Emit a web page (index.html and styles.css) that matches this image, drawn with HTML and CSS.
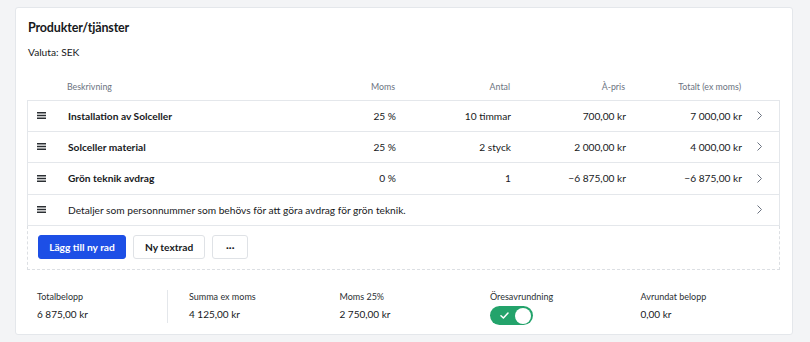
FILE: index.html
```html
<!DOCTYPE html>
<html lang="sv">
<head>
    <meta charset="UTF-8">
    <meta name="viewport" content="width=device-width, initial-scale=1.0">
    <title>Produkter/tjänster</title>
    <link rel="stylesheet" href="styles.css">
</head>
<body>
    <div class="card">
        <h2 class="card-title">Produkter/tjänster</h2>
        <p class="currency">Valuta: SEK</p>

        <div class="rows">
            <div class="row row-head">
                <span></span>
                <span>Beskrivning</span>
                <span class="num">Moms</span>
                <span class="num">Antal</span>
                <span class="num">À-pris</span>
                <span class="num">Totalt (ex moms)</span>
                <span></span>
            </div>

            <div class="row row-item">
                <span class="drag"><svg width="9" height="7" viewBox="0 0 9 7"><path d="M0 0.75H9M0 3.5H9M0 6.25H9" stroke="#2b2f33" stroke-width="1.3"/></svg></span>
                <span class="desc">Installation av Solceller</span>
                <span class="num">25 %</span>
                <span class="num">10 timmar</span>
                <span class="num">700,00 kr</span>
                <span class="num">7 000,00 kr</span>
                <span class="chev"><svg width="5" height="9" viewBox="0 0 5 9"><path d="M0.5 0.5L4.5 4.5L0.5 8.5" fill="none" stroke="#6b7280" stroke-width="1"/></svg></span>
            </div>
            <div class="row row-item">
                <span class="drag"><svg width="9" height="7" viewBox="0 0 9 7"><path d="M0 0.75H9M0 3.5H9M0 6.25H9" stroke="#2b2f33" stroke-width="1.3"/></svg></span>
                <span class="desc">Solceller material</span>
                <span class="num">25 %</span>
                <span class="num">2 styck</span>
                <span class="num">2 000,00 kr</span>
                <span class="num">4 000,00 kr</span>
                <span class="chev"><svg width="5" height="9" viewBox="0 0 5 9"><path d="M0.5 0.5L4.5 4.5L0.5 8.5" fill="none" stroke="#6b7280" stroke-width="1"/></svg></span>
            </div>
            <div class="row row-item">
                <span class="drag"><svg width="9" height="7" viewBox="0 0 9 7"><path d="M0 0.75H9M0 3.5H9M0 6.25H9" stroke="#2b2f33" stroke-width="1.3"/></svg></span>
                <span class="desc">Grön teknik avdrag</span>
                <span class="num">0 %</span>
                <span class="num">1</span>
                <span class="num">&minus;6 875,00 kr</span>
                <span class="num">&minus;6 875,00 kr</span>
                <span class="chev"><svg width="5" height="9" viewBox="0 0 5 9"><path d="M0.5 0.5L4.5 4.5L0.5 8.5" fill="none" stroke="#6b7280" stroke-width="1"/></svg></span>
            </div>
            <div class="row row-item row-text">
                <span class="drag"><svg width="9" height="7" viewBox="0 0 9 7"><path d="M0 0.75H9M0 3.5H9M0 6.25H9" stroke="#2b2f33" stroke-width="1.3"/></svg></span>
                <span class="note">Detaljer som personnummer som behövs för att göra avdrag för grön teknik.</span>
                <span class="chev"><svg width="5" height="9" viewBox="0 0 5 9"><path d="M0.5 0.5L4.5 4.5L0.5 8.5" fill="none" stroke="#6b7280" stroke-width="1"/></svg></span>
            </div>

            <div class="row-actions">
                <button class="btn btn-primary">Lägg till ny rad</button>
                <button class="btn">Ny textrad</button>
                <button class="btn btn-more">&middot;&middot;&middot;</button>
            </div>
        </div>

        <div class="summary">
            <div class="sum-col sum-first">
                <div class="sum-label">Totalbelopp</div>
                <div class="sum-value">6 875,00 kr</div>
            </div>
            <div class="sum-col">
                <div class="sum-label">Summa ex moms</div>
                <div class="sum-value">4 125,00 kr</div>
            </div>
            <div class="sum-col">
                <div class="sum-label">Moms 25%</div>
                <div class="sum-value">2 750,00 kr</div>
            </div>
            <div class="sum-col">
                <div class="sum-label">Öresavrundning</div>
                <div class="toggle on">
                    <svg class="toggle-check" width="9" height="7" viewBox="0 0 9 7">
                        <path d="M1 3.8 L3.4 6 L8 1" fill="none" stroke="#fff" stroke-width="1.5" stroke-linecap="round" stroke-linejoin="round"/>
                    </svg>
                    <span class="toggle-knob"></span>
                </div>
            </div>
            <div class="sum-col">
                <div class="sum-label">Avrundat belopp</div>
                <div class="sum-value">0,00 kr</div>
            </div>
        </div>
    </div>
</body>
</html>
```

FILE: styles.css
```css
body {
    margin: 0;
    padding: 7px 17px 0 15px;
    background: #f3f4f6;
    font-family: Lato, "Noto Sans", sans-serif;
    color: #17191c;
}

.card {
    background: #fff;
    border: 1px solid #e4e7eb;
    border-radius: 3px;
    height: 328px;
    padding: 0 12px 0 11px;
    box-sizing: border-box;
}

.card-title {
    margin: 12px 0 0 1px;
    font-size: 12.5px;
    font-weight: 700;
    line-height: 16px;
    letter-spacing: -0.15px;
}

.currency {
    margin: 8px 0 0 1px;
    font-size: 10.2px;
    line-height: 16px;
}

.row {
    display: grid;
    grid-template-columns: 40px 248px 80px 115px 115px 116px 1fr;
    align-items: center;
    font-size: 10.2px;
}

.row-head {
    height: 28px;
    margin-top: 12px;
    font-size: 8.8px;
    color: #6b7280;
}

.row-item {
    height: 31.5px;
    box-sizing: border-box;
    border: 1px solid #e4e7eb;
    border-top: none;
}

.row-head + .row-item {
    border-top: 1px solid #e4e7eb;
}

.num {
    text-align: right;
}

.desc {
    font-weight: 700;
}

.drag {
    display: flex;
    padding-left: 9px;
}

.chev {
    grid-column: 7;
    display: flex;
    justify-content: center;
    margin-right: 3px;
}

.row-text .note {
    grid-column: 2 / 7;
}

.row-actions {
    display: flex;
    gap: 7px;
    padding: 9px 10px 10px;
    border: 1px dashed #dcdfe3;
    border-top: none;
}

.btn {
    font-family: inherit;
    font-size: 10.2px;
    font-weight: 700;
    height: 24px;
    padding: 0 11px;
    border: 1px solid #dfe2e6;
    border-radius: 3px;
    background: #fff;
    color: #17191c;
    white-space: nowrap;
}

.btn-primary {
    background: #1d4fe6;
    border-color: #1d4fe6;
    color: #fff;
    width: 88px;
    padding: 0;
}

.btn-more {
    width: 36px;
    padding: 0;
}

.summary {
    display: flex;
    margin-top: 20px;
    padding-left: 10px;
}

.sum-col {
    flex-shrink: 0;
    width: 150.5px;
    font-size: 10px;
}

.sum-first {
    width: 130px;
    border-right: 1px solid #e4e7eb;
    margin-right: 21px;
    height: 33px;
}

.sum-label {
    font-size: 9px;
    line-height: 14px;
    color: #2b2f33;
}

.sum-value {
    margin-top: 1px;
    line-height: 18px;
}

.toggle {
    position: relative;
    width: 43px;
    height: 19px;
    margin-top: 2px;
    border-radius: 10px;
    background: #23a36b;
}

.toggle-check {
    position: absolute;
    left: 10px;
    top: 6px;
}

.toggle-knob {
    position: absolute;
    right: 2px;
    top: 1.5px;
    width: 16px;
    height: 16px;
    border-radius: 50%;
    background: #fff;
}
```
